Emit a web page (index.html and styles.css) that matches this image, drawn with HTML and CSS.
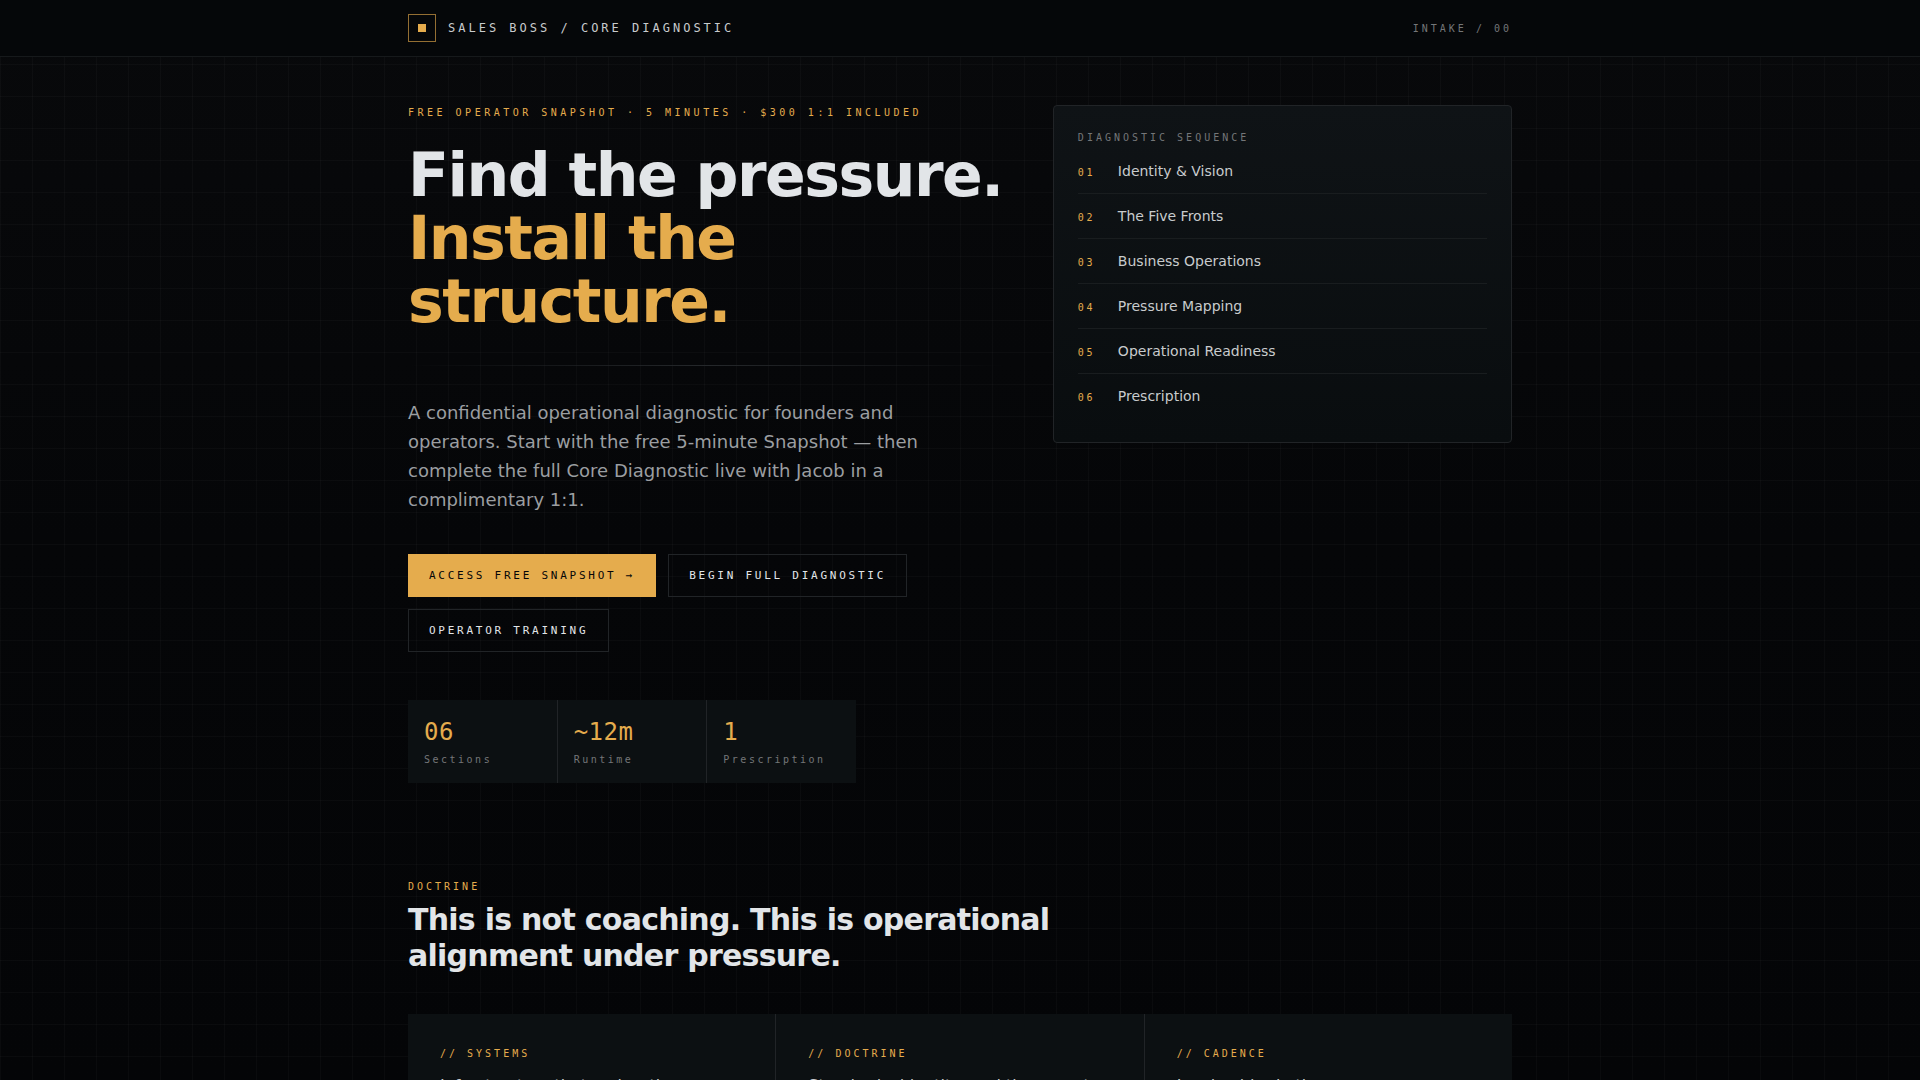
FILE: index.html
```html
<!DOCTYPE html>
<html lang="en">
<head>
<meta charset="utf-8">
<meta name="viewport" content="width=device-width, initial-scale=1">
<title>Sales Boss / Core Diagnostic</title>
<link rel="stylesheet" href="styles.css">
</head>
<body>
<header class="site-header">
  <div class="container header-inner">
    <a class="brand" href="#"><span class="brand-mark"></span><span>SALES BOSS / CORE DIAGNOSTIC</span></a>
    <span class="step">INTAKE / 00</span>
  </div>
</header>
<main class="container">
  <section class="hero">
    <div class="hero-copy">
      <p class="eyebrow eyebrow-wide">FREE OPERATOR SNAPSHOT · 5 MINUTES · $300 1:1 INCLUDED</p>
      <h1>Find the pressure.<br><span class="accent">Install the structure.</span></h1>
      <hr class="rule">
      <p class="lead">A confidential operational diagnostic for founders and operators. Start with the free 5-minute Snapshot — then complete the full Core Diagnostic live with Jacob in a complimentary 1:1.</p>
      <div class="actions">
        <a class="btn btn-primary" href="#">ACCESS FREE SNAPSHOT →</a>
        <a class="btn" href="#">BEGIN FULL DIAGNOSTIC</a>
        <a class="btn" href="#">OPERATOR TRAINING</a>
      </div>
      <dl class="stats">
        <div class="stat"><dd>06</dd><dt>Sections</dt></div>
        <div class="stat"><dd>~12m</dd><dt>Runtime</dt></div>
        <div class="stat"><dd>1</dd><dt>Prescription</dt></div>
      </dl>
    </div>
    <aside class="panel">
      <h2 class="panel-title">DIAGNOSTIC SEQUENCE</h2>
      <ol class="sequence">
        <li><span class="num">01</span><span>Identity &amp; Vision</span></li>
        <li><span class="num">02</span><span>The Five Fronts</span></li>
        <li><span class="num">03</span><span>Business Operations</span></li>
        <li><span class="num">04</span><span>Pressure Mapping</span></li>
        <li><span class="num">05</span><span>Operational Readiness</span></li>
        <li><span class="num">06</span><span>Prescription</span></li>
      </ol>
    </aside>
  </section>
  <section class="doctrine">
    <p class="eyebrow">DOCTRINE</p>
    <h2 class="section-title">This is not coaching. This is operational alignment under pressure.</h2>
    <div class="cards">
      <article class="card"><h3 class="eyebrow">// SYSTEMS</h3><p>Infrastructure that makes the</p></article>
      <article class="card"><h3 class="eyebrow">// DOCTRINE</h3><p>Standards, identity, and the operator</p></article>
      <article class="card"><h3 class="eyebrow">// CADENCE</h3><p>Leadership rhythm</p></article>
    </div>
  </section>
</main>
</body>
</html>
```

FILE: styles.css
```css
:root {
  --bg: #050608;
  --card: #0c1012;
  --line: #212427;
  --text: #e2e5e8;
  --soft: #c8cbcd;
  --muted: #9b9ea1;
  --faint: #747678;
  --gold: #e5ac4d;
  --mono: "DejaVu Sans Mono", monospace;
}

* { box-sizing: border-box; }

h1, h2, h3, p, dl, dd, ol { margin: 0; padding: 0; }

body {
  margin: 0;
  min-height: 100vh;
  color: var(--text);
  font: 16px/24px "DejaVu Sans", sans-serif;
  background-color: var(--bg);
  background-image:
    linear-gradient(to right, rgba(255, 255, 255, 0.025) 1px, transparent 1px),
    linear-gradient(to bottom, rgba(255, 255, 255, 0.025) 1px, transparent 1px),
    linear-gradient(to bottom, #08090b, #050608 540px, #040507 1080px);
  background-size: 32px 32px, 32px 32px, 100% 100%;
  overflow-x: hidden;
}

a { color: inherit; text-decoration: none; }

.container {
  width: 100%;
  max-width: 1152px;
  margin: 0 auto;
  padding: 0 24px;
}

.site-header {
  background: #050709;
  border-bottom: 1px solid #16191b;
}

.header-inner {
  display: flex;
  align-items: center;
  justify-content: space-between;
  height: 56px;
}

.brand {
  display: flex;
  align-items: center;
  gap: 12px;
  color: var(--soft);
  font: 12px/16px var(--mono);
  letter-spacing: 3px;
}

.brand-mark {
  display: grid;
  place-items: center;
  width: 28px;
  height: 28px;
  border: 1px solid #946f33;
}

.brand-mark::before {
  content: "";
  width: 8px;
  height: 8px;
  background: var(--gold);
}

.step {
  color: var(--faint);
  font: 10px/15px var(--mono);
  letter-spacing: 3px;
}

.hero {
  display: grid;
  grid-template-columns: 1.3fr 1fr;
  align-items: start;
  gap: 48px;
  padding: 48px 0 96px;
}

.eyebrow {
  color: var(--gold);
  font: 10px/15px var(--mono);
  letter-spacing: 3px;
}

.eyebrow-wide { letter-spacing: 0.35em; }

h1 {
  margin-top: 24px;
  font-size: 60px;
  font-weight: 700;
  line-height: 63px;
  letter-spacing: -0.025em;
}

.accent { color: var(--gold); }

.rule {
  height: 1px;
  margin: 32px 0;
  border: 0;
  background: linear-gradient(to right, transparent, #25282b, transparent);
}

.lead {
  max-width: 560px;
  color: var(--muted);
  font-size: 18px;
  line-height: 29px;
}

.actions {
  display: flex;
  flex-wrap: wrap;
  gap: 12px;
  margin-top: 40px;
}

.btn {
  padding: 14px 20px;
  border: 1px solid var(--line);
  font: 11px/normal var(--mono);
  letter-spacing: 0.25em;
}

.btn-primary {
  color: #050608;
  background: var(--gold);
  border-color: var(--gold);
}

.stats {
  display: grid;
  grid-template-columns: repeat(3, 1fr);
  gap: 1px;
  max-width: 448px;
  margin-top: 48px;
  background: var(--line);
}

.stat { padding: 16px; background: var(--card); }

.stat dd {
  color: var(--gold);
  font: 24px/32px var(--mono);
  letter-spacing: 0.02em;
}

.stat dt {
  margin-top: 4px;
  color: var(--faint);
  font: 10px/15px var(--mono);
  letter-spacing: 0.25em;
}

.panel {
  padding: 24px;
  border: 1px solid var(--line);
  border-radius: 4px;
  background: linear-gradient(to bottom, #0f1316, #090d0f);
}

.panel-title {
  margin-bottom: 4px;
  color: var(--faint);
  font: 10px/15px var(--mono);
  letter-spacing: 3px;
}

.sequence { list-style: none; }

.sequence li {
  display: grid;
  grid-template-columns: 24px 1fr;
  align-items: baseline;
  gap: 16px;
  padding: 12px 0;
  border-bottom: 1px solid #191d1f;
  color: var(--soft);
  font-size: 14px;
  line-height: 20px;
}

.sequence li:last-child { border-bottom: 0; }

.num {
  color: var(--gold);
  font: 10px/15px var(--mono);
  letter-spacing: 0.25em;
}

.section-title {
  max-width: 672px;
  margin-top: 8px;
  font-size: 30px;
  font-weight: 700;
  line-height: 36px;
  letter-spacing: -0.025em;
}

.cards {
  display: grid;
  grid-template-columns: repeat(3, 1fr);
  gap: 1px;
  margin-top: 40px;
  background: var(--line);
}

.card { padding: 32px; background: var(--card); }

.card p {
  margin-top: 12px;
  color: var(--soft);
  line-height: 26px;
}
```
